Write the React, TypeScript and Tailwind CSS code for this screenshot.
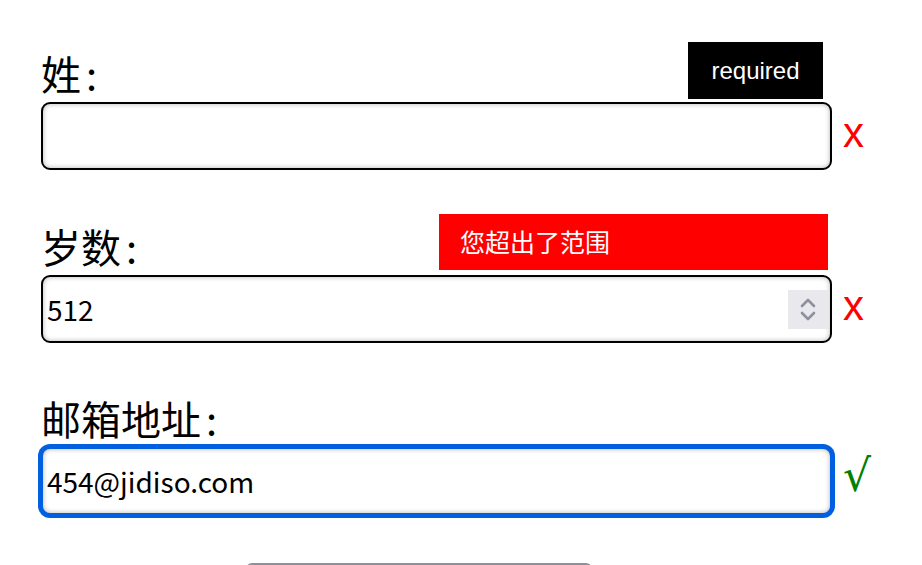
import { useState } from 'react'

const inputBox =
  'flex items-center w-[791px] h-[68px] rounded-[9px] border-2 bg-white shadow-[inset_0_0_5px_rgba(0,0,0,0.3)]'

function Spinner() {
  return (
    <div className="flex flex-col items-center justify-center gap-[3px] w-[40px] h-[39px] mr-[2px] bg-[#e9e9ed]">
      <svg width="16" height="10" viewBox="0 0 16 10">
        <polyline points="2,8 8,2 14,8" fill="none" stroke="#8f8f9d" strokeWidth="2.6" strokeLinecap="round" strokeLinejoin="round" />
      </svg>
      <svg width="16" height="10" viewBox="0 0 16 10">
        <polyline points="2,2 8,8 14,2" fill="none" stroke="#8f8f9d" strokeWidth="2.6" strokeLinecap="round" strokeLinejoin="round" />
      </svg>
    </div>
  )
}

export default function App() {
  const [surname, setSurname] = useState('')
  const [age, setAge] = useState('512')
  const [email, setEmail] = useState('454@jidiso.com')

  return (
    <div className="min-h-screen bg-white pl-[41px] pt-[49px] font-['Noto_Sans_CJK_SC',sans-serif] text-black overflow-hidden">
      <form className="flex flex-col w-[840px]" onSubmit={(e) => e.preventDefault()}>
        {/* 姓 */}
        <div className="relative flex flex-col">
          <label className="text-[40px] leading-[48px]">
            姓<span className="ml-[5px]">:</span>
          </label>
          <div className="absolute left-[647px] top-[-7px] flex items-center justify-center w-[135px] h-[57px] bg-black text-white text-[24px] font-['Liberation_Sans',sans-serif]">
            required
          </div>
          <div className="flex items-center mt-[5px]">
            <div className={`${inputBox} border-black`}>
              <input
                value={surname}
                onChange={(e) => setSurname(e.target.value)}
                className="flex-1 h-full bg-transparent outline-none px-[4px] text-[28px]"
              />
            </div>
            <span className="ml-[11px] text-[42px] leading-none text-[#ff0000] font-['Liberation_Sans',sans-serif] -mt-[6px]">x</span>
          </div>
        </div>

        {/* 岁数 */}
        <div className="relative flex flex-col mt-[52px]">
          <label className="text-[40px] leading-[48px]">
            岁数<span className="ml-[5px]">:</span>
          </label>
          <div className="absolute left-[398px] top-[-8px] flex items-center w-[389px] h-[56px] pl-[21px] bg-[#ff0000] text-white text-[25px]">
            您超出了范围
          </div>
          <div className="flex items-center mt-[5px]">
            <div className={`${inputBox} border-black`}>
              <input
                value={age}
                onChange={(e) => setAge(e.target.value)}
                className="flex-1 h-full bg-transparent outline-none px-[4px] text-[28px]"
              />
              <Spinner />
            </div>
            <span className="ml-[11px] text-[42px] leading-none text-[#ff0000] font-['Liberation_Sans',sans-serif] -mt-[6px]">x</span>
          </div>
        </div>

        {/* 邮箱地址 */}
        <div className="relative flex flex-col mt-[51px]">
          <label className="text-[40px] leading-[48px]">
            邮箱地址<span className="ml-[5px]">:</span>
          </label>
          <div className="flex items-center mt-[5px]">
            <div className={`${inputBox} border-[#0060df] ring-[3px] ring-[#0060df]`}>
              <input
                value={email}
                onChange={(e) => setEmail(e.target.value)}
                className="flex-1 h-full bg-transparent outline-none px-[4px] text-[28px]"
              />
            </div>
            <span className="ml-[11px] text-[44px] leading-none text-[#008000] font-['DejaVu_Sans',sans-serif] -mt-[10px]">√</span>
          </div>
        </div>

        <button
          type="submit"
          aria-label="提交"
          className="mt-[48px] ml-[205px] w-[346px] h-[44px] rounded-[6px] border-2 border-[#8f8f9d] bg-[#e9e9ed]"
        />
      </form>
    </div>
  )
}
